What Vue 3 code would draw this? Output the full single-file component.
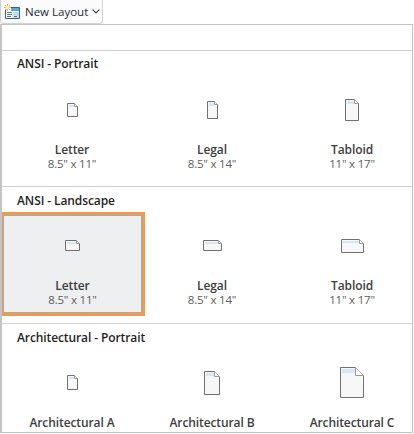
<script setup>
const sections = [
  {
    title: 'ANSI - Portrait',
    items: [
      { name: 'Letter', size: '8.5" x 11"', w: 11, h: 14 },
      { name: 'Legal', size: '8.5" x 14"', w: 11, h: 18 },
      { name: 'Tabloid', size: '11" x 17"', w: 14, h: 22 },
    ],
  },
  {
    title: 'ANSI - Landscape',
    items: [
      { name: 'Letter', size: '8.5" x 11"', w: 15, h: 11, selected: true },
      { name: 'Legal', size: '8.5" x 14"', w: 19, h: 11 },
      { name: 'Tabloid', size: '11" x 17"', w: 23, h: 14 },
    ],
  },
  {
    title: 'Architectural - Portrait',
    items: [
      { name: 'Architectural A', w: 11, h: 15 },
      { name: 'Architectural B', w: 16, h: 24 },
      { name: 'Architectural C', w: 24, h: 31 },
    ],
  },
]

const fold = (it) => Math.max(3, Math.round(Math.min(it.w, it.h) / 3.2))
const outline = (it) => {
  const f = fold(it)
  const r = it.w - 0.5
  const b = it.h - 0.5
  return `M.5 .5H${r - f}L${r} ${f + 0.5}V${b}H.5Z`
}
const foldLine = (it) => {
  const f = fold(it)
  const r = it.w - 0.5
  return `M${r - f} .5V${f + 0.5}H${r}`
}
const bandWidth = (it) => Math.max(2, it.w - fold(it) - 3)
const bandHeight = (it) => Math.max(1, Math.round(it.h / 7))
</script>

<template>
  <div class="page">
    <div class="toolbar">
      <button class="layout-btn">
        <svg class="btn-icon" width="16" height="15" viewBox="0 0 16 15">
          <path d="M3.5 3.5H15.5V14.5H1.5V6Z" fill="#f6fbff" stroke="#3f5f7d" />
          <rect x="7" y="4" width="8" height="3" fill="#58a6e0" />
          <path d="M3 8.5H8M3 10.5H8M3 12.5H7" stroke="#5f7183" />
          <rect x="9" y="8" width="6" height="6" fill="#bcdcf2" />
          <path d="M10 12.5H13" stroke="#2f7fc1" />
          <path d="M3.5 0V7M0 3.5H7M1 1L6 6M6 1L1 6" stroke="#e3b54c" />
          <circle cx="3.5" cy="3.5" r="1.7" fill="#fdf0bf" />
        </svg>
        <span class="btn-label">New Layout</span>
        <svg class="chevron" width="8" height="5" viewBox="0 0 8 5">
          <path d="M.7 .7L4 4L7.3 .7" fill="none" stroke="#444" stroke-width="1.1" />
        </svg>
      </button>
    </div>

    <div class="panel">
      <div class="spacer"></div>
      <section v-for="sec in sections" :key="sec.title" class="section">
        <h3 class="heading">{{ sec.title }}</h3>
        <div class="grid">
          <div
            v-for="it in sec.items"
            :key="it.name"
            class="item"
            :class="{ selected: it.selected }"
          >
            <div class="icon-box">
              <svg :width="it.w" :height="it.h" :viewBox="`0 0 ${it.w} ${it.h}`">
                <path :d="outline(it)" fill="#f7f7f8" stroke="#707070" />
                <rect
                  x="2"
                  y="2"
                  :width="bandWidth(it)"
                  :height="bandHeight(it)"
                  fill="#d6e8f7"
                />
                <path :d="foldLine(it)" fill="#fff" stroke="#9a9a9a" />
              </svg>
            </div>
            <div class="name">{{ it.name }}</div>
            <div v-if="it.size" class="size">{{ it.size }}</div>
          </div>
        </div>
      </section>
    </div>
  </div>
</template>

<style scoped>
.page {
  width: 414px;
  height: 434px;
  overflow: hidden;
  background: #fff;
  font-family: "Open Sans", "Noto Sans", sans-serif;
  display: flex;
  flex-direction: column;
}
.toolbar {
  height: 24px;
  flex: none;
  display: flex;
}
.layout-btn {
  width: 103px;
  height: 24px;
  box-sizing: border-box;
  padding: 0 0 0 3px;
  display: flex;
  align-items: center;
  justify-content: flex-start;
  background: #fbfbfb;
  border: 1px solid #d2d2d2;
  border-top: none;
  border-radius: 0 0 4px 4px;
  font: inherit;
}
.btn-icon {
  flex: none;
}
.btn-label {
  margin-left: 5px;
  font-size: 11.5px;
  color: #1b2a3a;
  white-space: nowrap;
}
.chevron {
  margin-left: 4px;
  flex: none;
}
.panel {
  flex: 1;
  min-height: 0;
  margin: 0 1px 1px 0;
  overflow: hidden;
  border: 1px solid #c4c4c4;
  border-left-width: 2px;
  box-sizing: border-box;
}
.spacer {
  height: 25px;
}
.section {
  height: 137px;
  box-sizing: border-box;
  border-top: 1px solid #d2d2d2;
}
.section:first-of-type {
  height: 136px;
}
.heading {
  margin: 0;
  height: 28px;
  padding-left: 15px;
  font-size: 12px;
  font-weight: 600;
  letter-spacing: -0.1px;
  line-height: 28px;
  color: #1f1f1f;
}
.section:first-of-type .heading {
  line-height: 26px;
}
.grid {
  display: grid;
  grid-template-columns: repeat(3, 140px);
}
.item {
  position: relative;
  height: 98px;
  box-sizing: border-box;
  text-align: center;
}
.item.selected {
  margin-left: 1px;
  background: #eeeff1;
  box-shadow: inset 0 0 0 1px #a9a9a9;
  outline: 3px solid #f09a4e;
}
.icon-box {
  height: 61px;
  display: flex;
  align-items: center;
  justify-content: center;
}
.icon-box svg {
  display: block;
}
.name {
  margin-top: 3px;
  font-size: 12px;
  font-weight: 600;
  letter-spacing: -0.1px;
  line-height: 14px;
  color: #3d3d3d;
}
.size {
  font-size: 11.5px;
  letter-spacing: -0.2px;
  line-height: 14px;
  color: #5c5c5c;
}
</style>
